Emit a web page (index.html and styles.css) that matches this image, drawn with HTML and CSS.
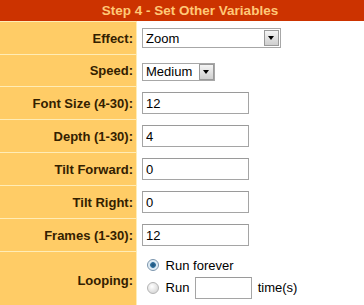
FILE: index.html
```html
<!DOCTYPE html>
<html lang="en">
<head>
    <meta charset="UTF-8">
    <title>Step 4 - Set Other Variables</title>
    <link rel="stylesheet" href="styles.css">
</head>
<body>
    <div class="vars">
        <div class="step">Step 4 - Set Other Variables</div>

        <div class="label">Effect:</div>
        <div class="field">
            <span class="dropdown wide">
                <select><option>Zoom</option><option>Spin</option><option>Wave</option></select>
                <span class="arrow"></span>
            </span>
        </div>

        <div class="label short">Speed:</div>
        <div class="field short">
            <span class="dropdown narrow">
                <select><option>Slow</option><option selected>Medium</option><option>Fast</option></select>
                <span class="arrow"></span>
            </span>
        </div>

        <div class="label">Font Size (4-30):</div>
        <div class="field"><input type="text" class="num" value="12"></div>

        <div class="label">Depth (1-30):</div>
        <div class="field"><input type="text" class="num" value="4"></div>

        <div class="label">Tilt Forward:</div>
        <div class="field"><input type="text" class="num" value="0"></div>

        <div class="label">Tilt Right:</div>
        <div class="field"><input type="text" class="num" value="0"></div>

        <div class="label">Frames (1-30):</div>
        <div class="field"><input type="text" class="num" value="12"></div>

        <div class="label tall">Looping:</div>
        <div class="field tall loop">
            <label class="opt"><input type="radio" name="loop" checked> Run forever</label>
            <label class="opt"><input type="radio" name="loop"> Run <input type="text" class="times"> time(s)</label>
        </div>
    </div>
</body>
</html>
```

FILE: styles.css
```css
html, body {
    margin: 0;
    padding: 0;
    background: #fff;
    overflow: hidden;
}
* {
    box-sizing: border-box;
}
.vars {
    display: grid;
    grid-template-columns: 137px 1fr;
    font-family: "Liberation Sans", Arial, sans-serif;
    font-size: 13px;
}
.step {
    grid-column: 1 / 3;
    height: 21px;
    line-height: 21px;
    padding-left: 16px;
    background: #cc3300;
    color: #ffc877;
    font-weight: bold;
    font-size: 13.5px;
    text-align: center;
}
.label {
    height: 33px;
    display: flex;
    align-items: center;
    justify-content: flex-end;
    padding-right: 3px;
    background: #ffcc66;
    border-top: 1px solid #ffecb6;
    border-right: 1px solid #ffecb6;
    color: #332000;
    font-weight: bold;
}
.field {
    height: 33px;
    display: flex;
    align-items: center;
    padding-left: 5px;
    padding-top: 1px;
}
.short {
    height: 32px;
}
.field.short {
    padding-top: 3px;
}
.tall {
    height: 60px;
}
.label.tall {
    padding-bottom: 3px;
}
.dropdown {
    position: relative;
    display: inline-block;
}
.dropdown select {
    -webkit-appearance: none;
    appearance: none;
    display: block;
    border: 1px solid #a7a7a7;
    background: #fff;
    font-family: "Liberation Sans", Arial, sans-serif;
    font-size: 13px;
    color: #000;
    padding: 0 0 0 3px;
    margin: 0;
    border-radius: 0;
}
.wide select {
    width: 139px;
    height: 20px;
}
.narrow select {
    width: 73px;
    height: 18px;
}
.arrow {
    position: absolute;
    right: 2px;
    top: 2px;
    bottom: 2px;
    width: 15px;
    border: 1px solid #9a9a9a;
    background: linear-gradient(#f4f4f4, #cfcfcf);
}
.narrow .arrow {
    right: 1px;
    top: 1px;
    bottom: 1px;
}
.arrow::after {
    content: "";
    position: absolute;
    left: 3px;
    top: 50%;
    margin-top: -2px;
    border-left: 3.5px solid transparent;
    border-right: 3.5px solid transparent;
    border-top: 4px solid #000;
}
input[type="text"] {
    height: 22px;
    border: 1px solid #a5a5a5;
    border-top-color: #9a9a9a;
    font-family: "Liberation Sans", Arial, sans-serif;
    font-size: 13px;
    color: #000;
    padding: 0 0 0 3px;
    margin: 0;
    outline: none;
}
.num {
    width: 107px;
}
.times {
    width: 57px;
    margin: 0 2px !important;
}
.loop {
    flex-direction: column;
    align-items: flex-start;
    justify-content: flex-start;
    padding-top: 6px;
    gap: 3px;
}
.opt {
    display: flex;
    align-items: center;
    color: #000;
    white-space: pre;
}
.opt:first-child {
    height: 16px;
}
.opt:last-child {
    height: 23px;
}
input[type="radio"] {
    -webkit-appearance: none;
    appearance: none;
    width: 12px;
    height: 12px;
    margin: 0 3px 0 5px;
    border-radius: 50%;
    border: 1px solid #b4b4b4;
    background: radial-gradient(circle at 40% 35%, #ffffff, #dcdcdc 70%);
}
input[type="radio"]:checked {
    border-color: #7b95ad;
    background: radial-gradient(circle, #1d4f78 0, #2f6f9c 2.5px, #d6e6f2 3.2px, #f2f7fb 6px);
}
```
